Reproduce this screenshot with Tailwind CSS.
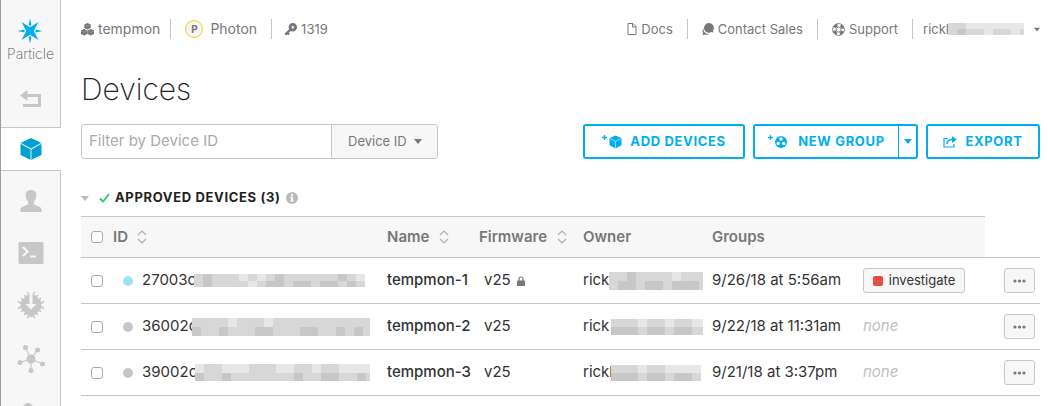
<!DOCTYPE html>
<html lang="en">
<head>
<meta charset="utf-8">
<title>Devices - Particle Console</title>
<script src="https://cdn.jsdelivr.net/npm/@tailwindcss/browser@4"></script>
</head>
<body class="bg-white font-['Inter',sans-serif] text-[#333]">
<!-- Shared icons -->
<svg class="hidden">
  <symbol id="sort" viewBox="0 0 10 14"><path d="M1 5l4-4 4 4M1 9l4 4 4-4" fill="none" stroke="#b0b0b0" stroke-width="1.2"/></symbol>
  <symbol id="dots" viewBox="0 0 13 4"><circle cx="2" cy="2" r="1.6"/><circle cx="6.5" cy="2" r="1.6"/><circle cx="11" cy="2" r="1.6"/></symbol>
  <symbol id="caret" viewBox="0 0 8 5"><path d="M0 0h8L4 5z"/></symbol>
</svg>
<div class="flex h-screen overflow-hidden">
  <nav class="flex w-[61px] shrink-0 flex-col border-l border-[#9c9c9c] bg-[#f7f7f7]" aria-label="Main">
    <div class="flex h-[127px] shrink-0 flex-col items-center border-r border-[#c7c7c7] pt-[18px]">
      <a href="#" class="flex flex-col items-center text-[14px] leading-5 font-extralight text-[#555]">
        <svg class="h-[26px] w-[26px]" viewBox="0 0 26 26" fill="#00aeef"><path d="M4.500 4L13 9.300 21.500 4 16.700 13l4.800 9-8.500-5.300L4.500 22l4.800-9z"/><path d="M13 .5l1.300 6L13 8.300 11.700 6.500zM13 25.500l1.300-6-1.300-1.800-1.300 1.800zM.5 13l6-1.300L8.300 13l-1.800 1.300zM25.500 13l-6-1.300-1.800 1.300 1.800 1.300z"/></svg>
        Particle
      </a>
      <a href="#" aria-label="Back" class="mt-[26px]"><svg class="h-[18px] w-[22px]" viewBox="0 0 22 18"><path d="M7 5.500h12.500v10H3" fill="none" stroke="#c7c7c7" stroke-width="3"/><path d="M0 5.500L7.500 0v11z" fill="#c7c7c7"/></svg></a>
    </div>
    <a href="#" aria-label="Devices" class="flex h-11 shrink-0 items-center justify-center border-y border-[#c7c7c7] bg-white">
      <svg class="h-[22px] w-[22px]" viewBox="0 0 22 22"><path d="M11 0l10.500 5v12L11 22 .5 17V5z" fill="#00a0d2"/><path d="M.5 5.200L11 11l10.500-5.800M11 11v11" fill="none" stroke="#c9ecf8" stroke-width="1.100"/></svg>
    </a>
    <div class="flex grow flex-col items-center gap-[26px] border-r border-[#c7c7c7] pt-[19px] *:shrink-0">
      <a href="#" aria-label="Team"><svg class="h-[22px] w-[22px]" viewBox="0 0 22 22" fill="#c7c7c7"><path d="M11 0c3.700 0 5.500 2.400 5.300 5.800-.1 2.600-1.100 4.500-2.500 6v2.400c2.300 1.500 5.400 2 7 3.600.8.900 1 2.200 1 4.200H.2c0-2 .2-3.300 1-4.200 1.600-1.600 4.700-2.100 7-3.600v-2.400c-1.400-1.500-2.400-3.400-2.500-6C5.500 2.400 7.300 0 11 0z"/></svg></a>
      <a href="#" aria-label="Console" class="mt-1"><svg class="h-[22px] w-[26px]" viewBox="0 0 26 22"><rect x=".5" width="25" height="22" rx="1.500" fill="#c7c7c7"/><path d="M5 5l4.500 4.500L5 14M12 14.500h6" fill="none" stroke="#f7f7f7" stroke-width="2.200"/></svg></a>
      <a href="#" aria-label="Firmware" class="mt-px"><svg class="h-7 w-7" viewBox="0 0 28 28"><path d="M10 4h8l6 6v8l-6 6-2 .500-2 2-2-2-2-.500-6-6v-8z" fill="#c7c7c7"/><path d="M1 10l3 3M4 7l3 3M7 4l3 3M10 1l3 3M18 1l-3 3M21 4l-3 3M24 7l-3 3M27 10l-3 3M1 18l3-3M4 21l3-3M7 24l3-3M10 27l3-3M18 27l-3-3M21 24l-3-3M24 21l-3-3M27 18l-3-3" stroke="#c7c7c7" stroke-width="1.600"/><path d="M14 1v14" stroke="#f7f7f7" stroke-width="3"/><path d="M8.500 13L14 18.500 19.500 13z" fill="#f7f7f7"/></svg></a>
      <a href="#" aria-label="Integrations"><svg class="h-7 w-7" viewBox="0 0 28 28" fill="#c7c7c7"><path d="M14 14L8.500 2.500M14 14l6.500-9M14 14L3 17.500M14 14l11.500 5M14 14v11" stroke="#c7c7c7" stroke-width="1.100"/><circle cx="14" cy="14" r="4.500"/><circle cx="8.500" cy="2.500" r="2.500"/><circle cx="20.500" cy="5" r="2.500"/><circle cx="3" cy="17.500" r="2.500"/><circle cx="25.500" cy="19" r="2.500"/><circle cx="14" cy="25.500" r="2.500"/></svg></a>
      <a href="#" aria-label="More"><svg class="h-4 w-6" viewBox="0 0 24 16" fill="#c7c7c7"><circle cx="9" cy="9" r="5"/></svg></a>
    </div>
  </nav>

  <main class="min-w-0 grow pt-[19px] pr-2 pl-5">
    <header class="flex h-5 items-center justify-between text-[14px] leading-5 text-[#777]">
      <div class="flex items-center">
        <a href="#" class="flex items-center gap-1 border-r border-[#c7c7c7] pr-2.5">
          <svg class="h-[13px] w-[13px]" viewBox="0 0 13 13" fill="#777"><path d="M6.500 0l3.200 1.500v3.400L6.500 6.500 3.300 4.900V1.500zM3.200 6.100l3.200 1.500V11l-3.200 1.600L0 11V7.600zM9.800 6.100L13 7.600V11l-3.200 1.600L6.600 11V7.600z"/><path d="M4 2l2.500 1.100L9 2M.7 8.200l2.500 1.100 2.500-1.100M7.300 8.200l2.500 1.100 2.500-1.100" stroke="#aaa" stroke-width=".5" fill="none"/></svg>
          tempmon</a>
        <a href="#" class="flex items-center gap-[7px] border-r border-[#c7c7c7] px-3.5">
          <span class="flex h-[18px] w-[18px] items-center justify-center rounded-full border border-[#f0d020] bg-[#f5f5f5] text-[10px] font-bold">P</span>
          Photon</a>
        <a href="#" class="flex items-center gap-1 pl-3 text-[13px]">
          <svg class="h-[13px] w-[13px]" viewBox="0 0 13 13"><path d="M1.300 11.700L7 6M3 9.500l2 2" stroke="#777" stroke-width="2.400"/><circle cx="8.800" cy="4.200" r="2.700" fill="none" stroke="#777" stroke-width="3"/></svg>
          1319</a>
      </div>
      <div class="flex items-center text-[13px]">
        <a href="#" class="flex items-center gap-1 border-r border-[#c7c7c7] pr-3.5">
          <svg class="h-3 w-[10px]" viewBox="0 0 10 12"><path d="M1 .5h5l3 3v8H1zM5.500.5V4H9" fill="none" stroke="#777"/></svg>Docs</a>
        <a href="#" class="flex items-center gap-1 border-r border-[#c7c7c7] px-3.5">
          <svg class="h-3 w-3" viewBox="0 0 12 12" fill="#777"><path d="M7 0a4.800 4.800 0 014 7.500l.6 2-2-.5A4.900 4.900 0 117 0z"/><path d="M1.200 5.500A5.700 5.700 0 007.500 11a5 5 0 01-4.500.4l-2.600.5.700-2.400a4 4 0 01.1-4z"/></svg>Contact Sales</a>
        <a href="#" class="flex items-center gap-1 border-r border-[#c7c7c7] px-3.5">
          <svg class="h-[13px] w-[13px]" viewBox="0 0 13 13"><circle cx="6.500" cy="6.500" r="5.900" fill="none" stroke="#777"/><circle cx="6.500" cy="6.500" r="4.300" fill="none" stroke="#777" stroke-width="2.600" stroke-dasharray="3.600 3.150" stroke-dashoffset="-1.600"/><circle cx="6.500" cy="6.500" r="2.500" fill="none" stroke="#777" stroke-width=".9"/></svg>Support</a>
        <button type="button" class="flex items-center pl-2.5" aria-label="Account">
          rickl<svg data-mosaic="ddeeeeeee" data-b="dcddedded" data-w="76" class="-ml-px h-3 w-[76px]"></svg>
          <svg class="ml-2.5 h-[5px] w-1.5" fill="#777" preserveAspectRatio="none"><use href="#caret"/></svg>
        </button>
      </div>
    </header>

    <h1 class="mt-8 text-[30px] leading-9 font-extralight text-[#222]">Devices</h1>

    <div class="mt-[17px] flex items-stretch justify-between">
      <form class="flex h-[35px] w-[357px] overflow-hidden rounded-[3px] border border-[#c7c7c7]">
        <input type="text" aria-label="Filter by Device ID" placeholder="Filter by Device ID" class="min-w-0 grow px-[7px] text-[15px] text-[#333] outline-none placeholder:text-[#aaa]">
        <span class="relative flex w-[106px] shrink-0 border-l border-[#c7c7c7] bg-[#f7f7f7]">
          <select aria-label="Filter field" class="w-full appearance-none pl-4 text-[13px] text-[#777]"><option>Device ID</option></select>
          <svg class="pointer-events-none absolute top-3.5 right-[15px] h-[5px] w-2" fill="#777"><use href="#caret"/></svg>
        </span>
      </form>
      <div class="flex gap-2 text-[13px] font-bold text-[#00aeef]">
        <button type="button" class="flex w-[162px] items-center justify-center gap-2 rounded-[3px] border-2 border-[#00aeef] tracking-wider whitespace-nowrap">
          <svg class="h-[15px] w-5" viewBox="0 0 20 15"><path d="M0 3.500h5M2.500 1v5" stroke="#00aeef" stroke-width="1.300"/><path d="M13.500 1.500l6 2.600v7.200l-6 3.200-6-3.200V4.100z" fill="#00aeef"/><path d="M7.500 4.300l6 3 6-3M13.500 7.300v7" stroke="#d5f2fd" stroke-width=".7" fill="none"/></svg>
          ADD DEVICES</button>
        <div class="flex w-[165px] rounded-[3px] border-2 border-[#00aeef]">
          <button type="button" class="flex grow items-center justify-center gap-2.5 tracking-wider whitespace-nowrap">
            <svg class="h-[15px] w-5" viewBox="0 0 20 15"><path d="M0 3.500h5M2.500 1v5" stroke="#00aeef" stroke-width="1.300"/><circle cx="13" cy="8" r="6" fill="#00aeef"/><circle cx="13" cy="5" r="1.700" fill="#fff"/><circle cx="10.300" cy="9.500" r="1.700" fill="#fff"/><circle cx="15.700" cy="9.500" r="1.700" fill="#fff"/></svg>
            NEW GROUP</button>
          <button type="button" aria-label="More group actions" class="flex w-[18px] items-center justify-center border-l border-[#00aeef]"><svg class="h-[5px] w-2" fill="#00aeef"><use href="#caret"/></svg></button>
        </div>
        <button type="button" class="flex w-[114px] items-center justify-center gap-2 rounded-[3px] border-2 border-[#00aeef] tracking-wider">
          <svg class="h-3 w-[14px]" viewBox="0 0 14 12"><path d="M5 2.500H1v8.500h10V8" fill="none" stroke="#00aeef" stroke-width="1.200"/><path d="M4 8c0-3 2-4.500 5.500-4.500" fill="none" stroke="#00aeef" stroke-width="1.600"/><path d="M9 0l4.800 3.500L9 7z" fill="#00aeef"/></svg>
          EXPORT</button>
      </div>
    </div>

    <h2 class="mt-[29px] flex h-5 items-center text-[13px] font-bold text-[#222]">
      <svg class="h-[5px] w-2" fill="#bbb"><use href="#caret"/></svg>
      <svg class="ml-2.5 h-[10px] w-[11px]" viewBox="0 0 11 10"><path d="M1 5.500l3 3L10 1" fill="none" stroke="#2ecc71" stroke-width="2"/></svg>
      <span class="ml-[5px] tracking-wider">APPROVED DEVICES (3)</span>
      <svg class="ml-[5px] h-3 w-3" viewBox="0 0 12 12"><circle cx="6" cy="6" r="6" fill="#bbb"/><path d="M5 2h2v1.700H5zM4.300 4.700H7v3.700h.9v1.200H4.200V8.400h.9V5.900h-.8z" fill="#fff"/></svg>
    </h2>

    <table class="mt-2 w-full table-fixed border-collapse text-left text-[15px]">
      <colgroup><col class="w-8"><col><col class="w-[92px]"><col class="w-[104px]"><col class="w-[129px]"><col class="w-[151px]"><col class="w-[122px]"><col class="w-[55px]"></colgroup>
      <thead>
        <tr class="h-[41px] border-b border-[#c7c7c7] text-[#777] *:font-semibold">
          <th class="border-t border-[#c7c7c7] bg-[#f7f7f7] pl-2.5"><input type="checkbox" aria-label="Select all devices" class="block h-3 w-3 appearance-none rounded-[3px] border border-[#aaa] bg-white checked:bg-[#00aeef]"></th>
          <th class="border-t border-[#c7c7c7] bg-[#f7f7f7]"><span class="flex items-center gap-[9px]">ID <svg class="h-[14px] w-2.5"><use href="#sort"/></svg></span></th>
          <th class="border-t border-[#c7c7c7] bg-[#f7f7f7]"><span class="flex items-center gap-2.5">Name <svg class="h-[14px] w-2.5"><use href="#sort"/></svg></span></th>
          <th class="border-t border-[#c7c7c7] bg-[#f7f7f7]"><span class="flex items-center gap-2.5">Firmware <svg class="h-[14px] w-2.5"><use href="#sort"/></svg></span></th>
          <th class="border-t border-[#c7c7c7] bg-[#f7f7f7]">Owner</th>
          <th colspan="2" class="border-t border-[#c7c7c7] bg-[#f7f7f7]">Groups</th>
          <td></td>
        </tr>
      </thead>
      <tbody class="whitespace-nowrap">
        <tr class="h-[46px] border-b border-[#c7c7c7]">
          <td class="pl-2.5"><input type="checkbox" aria-label="Select tempmon-1" class="block h-3 w-3 appearance-none rounded-[3px] border border-[#aaa] bg-white checked:bg-[#00aeef]"></td>
          <td><span class="flex items-center pl-2.5"><span class="mr-[9px] h-2.5 w-2.5 rounded-full bg-[#9fe1fa]"></span>27003c<svg data-mosaic="dcdddededcddddddcde" data-b="dcddddedccdccdccdcd" data-w="172" class="-ml-0.5 h-[13px] w-[172px]"></svg></span></td>
          <td class="font-medium">tempmon-1</td>
          <td><span class="flex items-center gap-1.5 pl-[5px]">v25 <svg class="h-[10px] w-2" viewBox="0 0 8 10"><path d="M2 5V3a2 2 0 014 0v2" fill="none" stroke="#777" stroke-width="1.200"/><rect y="4.500" width="8" height="5.500" rx=".5" fill="#777"/></svg></span></td>
          <td><span class="flex items-center">rick<svg data-mosaic="ddcddddeddd" data-b="dccdccdcccd" data-w="94" class="h-[18px] w-[94px]"></svg></span></td>
          <td>9/26/18 at 5:56am</td>
          <td><button type="button" class="flex h-[25px] w-[102px] items-center justify-center gap-1.5 rounded-[3px] border border-[#c7c7c7] bg-[#f7f7f7] text-[13px]"><span class="h-2.5 w-2.5 rounded-[2px] bg-[#e84c3d]"></span>investigate</button></td>
          <td><button type="button" aria-label="Actions for tempmon-1" class="ml-[19px] flex h-[25px] w-[31px] items-center justify-center rounded-[3px] border border-[#c7c7c7] bg-[#f7f7f7]"><svg class="h-1 w-[13px]" fill="#777"><use href="#dots"/></svg></button></td>
        </tr>
        <tr class="h-[46px] border-b border-[#c7c7c7]">
          <td class="pl-2.5"><input type="checkbox" aria-label="Select tempmon-2" class="block h-3 w-3 appearance-none rounded-[3px] border border-[#aaa] bg-white checked:bg-[#00aeef]"></td>
          <td><span class="flex items-center pl-2.5"><span class="mr-[9px] h-2.5 w-2.5 rounded-full bg-[#c7c7c7]"></span>36002c<svg data-mosaic="ddddedddeddddddddddd" data-b="cddcdddccdddccddcdcd" data-w="178" class="-ml-[5px] h-[18px] w-[178px]"></svg></span></td>
          <td class="font-medium">tempmon-2</td>
          <td class="pl-[5px]">v25</td>
          <td><span class="flex items-center">rick<svg data-mosaic="dddeddeddee" data-b="cccdccdccdd" data-w="92" class="ml-0.5 h-4 w-[92px]"></svg></span></td>
          <td>9/22/18 at 11:31am</td>
          <td class="text-[#c0c0c0] italic">none</td>
          <td><button type="button" aria-label="Actions for tempmon-2" class="ml-[19px] flex h-[25px] w-[31px] items-center justify-center rounded-[3px] border border-[#c7c7c7] bg-[#f7f7f7]"><svg class="h-1 w-[13px]" fill="#777"><use href="#dots"/></svg></button></td>
        </tr>
        <tr class="h-[46px] border-b border-[#c7c7c7]">
          <td class="pl-2.5"><input type="checkbox" aria-label="Select tempmon-3" class="block h-3 w-3 appearance-none rounded-[3px] border border-[#aaa] bg-white checked:bg-[#00aeef]"></td>
          <td><span class="flex items-center pl-2.5"><span class="mr-[9px] h-2.5 w-2.5 rounded-full bg-[#c7c7c7]"></span>39002c<svg data-mosaic="eddeeedddeeddeddeeee" data-b="cddcdddddddcddccddcd" data-w="175" class="-ml-0.5 h-[17px] w-[175px]"></svg></span></td>
          <td class="font-medium">tempmon-3</td>
          <td class="pl-[5px]">v25</td>
          <td><span class="flex items-center">rickl<svg data-mosaic="dddeddeeee" data-b="cccdccdccd" data-w="90" class="-ml-0.5 h-4 w-[90px]"></svg></span></td>
          <td>9/21/18 at 3:37pm</td>
          <td class="text-[#c0c0c0] italic">none</td>
          <td><button type="button" aria-label="Actions for tempmon-3" class="ml-[19px] flex h-[25px] w-[31px] items-center justify-center rounded-[3px] border border-[#c7c7c7] bg-[#f7f7f7]"><svg class="h-1 w-[13px]" fill="#777"><use href="#dots"/></svg></button></td>
        </tr>
      </tbody>
    </table>
  </main>
</div>
<script>
  // Masks private values with two rows of grey 9px blocks, one hex digit per block.
  for (const svg of document.querySelectorAll('[data-mosaic]')) {
    [svg.dataset.mosaic, svg.dataset.b].forEach((row, y) => {
      [...row].forEach((shade, x) => {
        const cell = document.createElementNS('http://www.w3.org/2000/svg', 'rect');
        cell.setAttribute('x', x * 9);
        cell.setAttribute('y', y ? '50%' : '0');
        cell.setAttribute('width', 9);
        cell.setAttribute('height', '50%');
        cell.setAttribute('fill', '#' + (shade + '7').repeat(3));
        cell.setAttribute('shape-rendering', 'crispEdges');
        svg.append(cell);
      });
    });
  }
</script>
</body>
</html>
